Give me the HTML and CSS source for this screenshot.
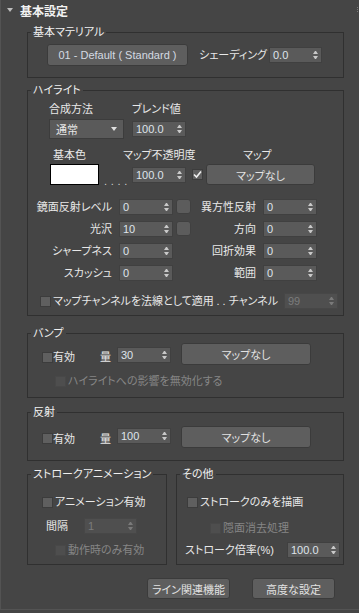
FILE: index.html
```html
<!DOCTYPE html>
<html lang="ja">
<head>
    <meta charset="UTF-8">
    <meta name="viewport" content="width=device-width, initial-scale=1.0">
    <title>基本設定</title>
    <link rel="stylesheet" href="styles.css">
</head>
<body>
    <div class="panel">
        <div class="roll-head">
            <span class="tri"></span>
            <span class="roll-title">基本設定</span>
            <span class="grip"></span>
        </div>

        <div class="roll-body">
            <fieldset class="grp grp-basic">
                <legend>基本マテリアル</legend>
                <div class="basic-row">
                    <button class="btn btn-mat">01 - Default ( Standard )</button>
                    <span class="lbl lbl-shade">シェーディング</span>
                    <div class="spin w53"><span>0.0</span><i class="arr"></i></div>
                </div>
            </fieldset>

            <fieldset class="grp grp-hl">
                <legend>ハイライト</legend>
                <div class="hl-head">
                    <span class="lbl c-mode">合成方法</span>
                    <span class="lbl">ブレンド値</span>
                </div>
                <div class="hl-ctrl">
                    <div class="drop"><span>通常</span><i class="drop-arr"></i></div>
                    <div class="spin w54"><span>100.0</span><i class="arr"></i></div>
                </div>
                <div class="hl-head2">
                    <span class="lbl c-base">基本色</span>
                    <span class="lbl c-opac">マップ不透明度</span>
                    <span class="lbl c-map">マップ</span>
                </div>
                <div class="hl-ctrl2">
                    <div class="swatch"></div>
                    <span class="dots">....</span>
                    <div class="spin w54"><span>100.0</span><i class="arr"></i></div>
                    <span class="chk on">
                        <svg width="9" height="9" viewBox="0 0 9 9"><path d="M1 4.5 L3.5 7 L8 1.5" fill="none" stroke="#f0f0f0" stroke-width="1.6"/></svg>
                    </span>
                    <button class="btn btn-map">マップなし</button>
                </div>

                <div class="spec-grid">
                    <span class="lbl r">鏡面反射レベル</span>
                    <div class="spin"><span>0</span><i class="arr"></i></div>
                    <span class="sq"></span>
                    <span class="lbl r">異方性反射</span>
                    <div class="spin"><span>0</span><i class="arr"></i></div>

                    <span class="lbl r">光沢</span>
                    <div class="spin"><span>10</span><i class="arr"></i></div>
                    <span class="sq"></span>
                    <span class="lbl r">方向</span>
                    <div class="spin"><span>0</span><i class="arr"></i></div>

                    <span class="lbl r">シャープネス</span>
                    <div class="spin"><span>0</span><i class="arr"></i></div>
                    <span></span>
                    <span class="lbl r">回折効果</span>
                    <div class="spin"><span>0</span><i class="arr"></i></div>

                    <span class="lbl r">スカッシュ</span>
                    <div class="spin"><span>0</span><i class="arr"></i></div>
                    <span></span>
                    <span class="lbl r">範囲</span>
                    <div class="spin"><span>0</span><i class="arr"></i></div>
                </div>

                <div class="chan-row">
                    <span class="chk"></span>
                    <span class="lbl ml2">マップチャンネルを法線として適用</span>
                    <span class="lbl chan-lbl">. . チャンネル</span>
                    <div class="spin w54 off"><span>99</span><i class="arr"></i></div>
                </div>
            </fieldset>

            <fieldset class="grp grp-bump">
                <legend>バンプ</legend>
                <div class="amt-row">
                    <span class="chk"></span>
                    <span class="lbl l-on">有効</span>
                    <span class="lbl l-amt">量</span>
                    <div class="spin w54"><span>30</span><i class="arr"></i></div>
                    <button class="btn btn-wide">マップなし</button>
                </div>
                <div class="sub-row">
                    <span class="chk off"></span>
                    <span class="lbl ml2 dim">ハイライトへの影響を無効化する</span>
                </div>
            </fieldset>

            <fieldset class="grp grp-refl">
                <legend>反射</legend>
                <div class="amt-row">
                    <span class="chk"></span>
                    <span class="lbl l-on">有効</span>
                    <span class="lbl l-amt">量</span>
                    <div class="spin w54"><span>100</span><i class="arr"></i></div>
                    <button class="btn btn-wide">マップなし</button>
                </div>
            </fieldset>

            <div class="pair">
                <fieldset class="grp grp-anim">
                    <legend>ストロークアニメーション</legend>
                    <div class="chk-row">
                        <span class="chk"></span>
                        <span class="lbl ml2">アニメーション有効</span>
                    </div>
                    <div class="step-row">
                        <span class="lbl l-step">間隔</span>
                        <div class="spin w53 off"><span>1</span><i class="arr"></i></div>
                    </div>
                    <div class="sub-row">
                        <span class="chk off"></span>
                        <span class="lbl ml2 dim">動作時のみ有効</span>
                    </div>
                </fieldset>

                <fieldset class="grp grp-misc">
                    <legend>その他</legend>
                    <div class="chk-row">
                        <span class="chk"></span>
                        <span class="lbl ml2">ストロークのみを描画</span>
                    </div>
                    <div class="hid-row">
                        <span class="chk off"></span>
                        <span class="lbl ml2 dim">隠面消去処理</span>
                    </div>
                    <div class="scale-row">
                        <span class="lbl l-scale">ストローク倍率(%)</span>
                        <div class="spin w53"><span>100.0</span><i class="arr"></i></div>
                    </div>
                </fieldset>
            </div>

            <div class="foot">
                <button class="btn btn-foot">ライン関連機能</button>
                <button class="btn btn-foot">高度な設定</button>
            </div>
        </div>
    </div>
</body>
</html>
```

FILE: styles.css
```css
* {
    box-sizing: border-box;
}
body {
    margin: 0;
    background-color: #454545;
    font-family: "Liberation Sans", "Noto Sans CJK JP", sans-serif;
    font-size: 11px;
    color: #e8e8e8;
    font-feature-settings: "palt";
}
.panel {
    width: 359px;
    height: 610px;
    border-left: 1px solid #535353;
    border-bottom: 1px solid #535353;
}

/* rollout header */
.roll-head {
    display: flex;
    align-items: center;
    height: 20px;
    padding-left: 6px;
}
.tri {
    width: 0;
    height: 0;
    border-top: 4px solid #bdbdbd;
    border-left: 3px solid transparent;
    border-right: 3px solid transparent;
}
.roll-title {
    margin-left: 7px;
    font-size: 12px;
    font-weight: bold;
    color: #f2f2f2;
}
.grip {
    margin-left: auto;
    margin-right: 1px;
    width: 1px;
    height: 6px;
    background: repeating-linear-gradient(#7a7a7a 0 1px, transparent 1px 2px);
}
.roll-body {
    padding: 6px 0 0 26px;
}

/* group boxes */
.grp {
    margin: 0;
    padding: 0;
    min-width: 0;
    width: 317px;
    border: 1px solid #303030;
}
.grp legend {
    margin-left: 3px;
    padding: 0 2px;
    height: 13px;
    line-height: 13px;
    font-size: 11px;
    color: #f0f0f0;
}
.lbl {
    line-height: 14px;
    white-space: nowrap;
}
.lbl.r {
    text-align: right;
    padding-right: 7px;
}
.ml2 {
    margin-left: 2px;
}
.dim {
    color: #868686;
}

/* controls */
.btn {
    font: inherit;
    font-size: 11px;
    color: #e2e2e2;
    background-color: #5e5e5e;
    border: 1px solid #3b3b3b;
    border-radius: 3px;
    padding: 0;
}
.spin {
    display: flex;
    align-items: center;
    height: 16px;
    padding-left: 3px;
    background-color: #5a5a5a;
    border: 1px solid #404040;
    color: #dfe4ea;
    line-height: 14px;
}
.w53 { width: 53px; }
.w54 { width: 54px; }
.arr {
    margin-left: auto;
    margin-right: 3px;
    display: flex;
    flex-direction: column;
    gap: 2px;
}
.arr::before,
.arr::after {
    content: "";
    width: 1px;
    height: 0;
    border-left: 2px solid transparent;
    border-right: 2px solid transparent;
}
.arr::before {
    border-bottom: 3px solid #c9c9c9;
}
.arr::after {
    border-top: 3px solid #c9c9c9;
}
.spin.off {
    background-color: #4f4f4f;
    border-color: #474747;
    color: #7c7c7c;
}
.spin.off .arr::before { border-bottom-color: #7a7a7a; }
.spin.off .arr::after { border-top-color: #7a7a7a; }

.chk {
    flex: none;
    width: 11px;
    height: 11px;
    background-color: #5f5f5f;
    border: 1px solid #3c3c3c;
    display: flex;
    align-items: center;
    justify-content: center;
}
.chk.off {
    background-color: #4e4e4e;
    border-color: #484848;
}
.drop {
    display: flex;
    align-items: center;
    width: 75px;
    height: 20px;
    padding-left: 6px;
    background-color: #5a5a5a;
    border: 1px solid #3c3c3c;
    color: #e6e6e6;
}
.drop-arr {
    margin-left: auto;
    margin-right: 6px;
    width: 0;
    height: 0;
    border-top: 4px solid #e0e0e0;
    border-left: 3px solid transparent;
    border-right: 3px solid transparent;
}
.swatch {
    width: 49px;
    height: 21px;
    background-color: #fff;
    border: 1px solid #000;
}
.dots {
    margin-left: 5px;
    width: 24px;
    align-self: flex-end;
    line-height: 8px;
    letter-spacing: 3.7px;
    color: #cfcfcf;
}
.sq {
    justify-self: end;
    width: 15px;
    height: 15px;
    align-self: start;
    background-color: #5c5c5c;
    border: 1px solid #404040;
    border-radius: 3px;
}

/* base material */
.grp-basic {
    padding: 5px 0 11px;
}
.basic-row {
    display: flex;
    align-items: center;
    height: 22px;
    padding-left: 19px;
}
.btn-mat {
    width: 141px;
    height: 22px;
    color: #d4dae2;
}
.lbl-shade {
    width: 81px;
    text-align: right;
    padding-right: 2px;
}

/* highlight */
.grp-hl {
    margin-top: 6px;
    padding: 5px 0 6px;
}
.hl-head {
    display: flex;
    padding-left: 21px;
}
.c-mode { width: 83px; }
.hl-ctrl {
    display: flex;
    align-items: center;
    height: 20px;
    margin-top: 3px;
    padding-left: 21px;
}
.hl-ctrl .spin { margin-left: 8px; }
.hl-head2 {
    display: flex;
    margin-top: 9px;
    padding-left: 25px;
}
.c-base { width: 70px; }
.c-opac { width: 83px; }
.c-map { padding-left: 37px; }
.hl-ctrl2 {
    display: flex;
    align-items: center;
    height: 21px;
    margin-top: 2px;
    padding-left: 22px;
}
.hl-ctrl2 .spin { margin-left: 4px; }
.hl-ctrl2 .chk { margin-left: 6px; }
.btn-map {
    margin-left: 3px;
    width: 109px;
    height: 21px;
}
.spec-grid {
    display: grid;
    grid-template-columns: 91px 54px 18px 72px 54px;
    grid-auto-rows: 16px;
    row-gap: 6px;
    align-items: center;
    margin-top: 14px;
}
.chan-row {
    display: flex;
    align-items: center;
    height: 16px;
    margin-top: 12px;
    padding: 0 5px 0 12px;
}
.chan-lbl {
    margin-left: auto;
    margin-right: 6px;
}

/* bump and reflection */
.grp-bump {
    margin-top: 11px;
    padding: 3px 0 9px;
}
.amt-row {
    display: flex;
    align-items: flex-start;
    height: 22px;
    padding-left: 14px;
}
.amt-row .chk { margin-top: 9px; }
.amt-row .lbl { margin-top: 7px; }
.amt-row .spin { margin-top: 4px; }
.l-on {
    width: 45px;
}
.l-amt {
    width: 19px;
    text-align: right;
    padding-right: 6px;
}
.btn-wide {
    margin-left: 10px;
    width: 130px;
    height: 22px;
}
.sub-row {
    display: flex;
    align-items: center;
    margin-top: 9px;
    padding-left: 27px;
}
.grp-refl {
    margin-top: 8px;
    padding: 7px 0 12px;
}
.grp-refl .chk { margin-top: 7px; }
.grp-refl .lbl { margin-top: 6px; }
.grp-refl .spin { margin-top: 2px; }

/* stroke animation / misc */
.pair {
    display: flex;
    margin-top: 7px;
}
.grp-anim {
    width: 140px;
    padding: 0 0 7px;
}
.grp-misc {
    width: 168px;
    margin-left: 9px;
    padding: 0 0 6px;
}
.chk-row {
    display: flex;
    align-items: center;
    margin-top: 14px;
}
.grp-anim .chk-row { padding-left: 14px; }
.grp-misc .chk-row { padding-left: 10px; }
.step-row {
    display: flex;
    align-items: center;
    height: 16px;
    margin-top: 9px;
    padding-left: 18px;
}
.l-step { width: 38px; }
.hid-row {
    display: flex;
    align-items: center;
    margin-top: 12px;
    padding-left: 33px;
}
.scale-row {
    display: flex;
    align-items: center;
    height: 16px;
    margin-top: 7px;
    padding-left: 8px;
}
.l-scale { width: 102px; }

/* footer buttons */
.foot {
    display: flex;
    margin-top: 13px;
    padding-left: 120px;
}
.btn-foot {
    width: 83px;
    height: 21px;
}
.btn-foot + .btn-foot {
    margin-left: 22px;
}
```
